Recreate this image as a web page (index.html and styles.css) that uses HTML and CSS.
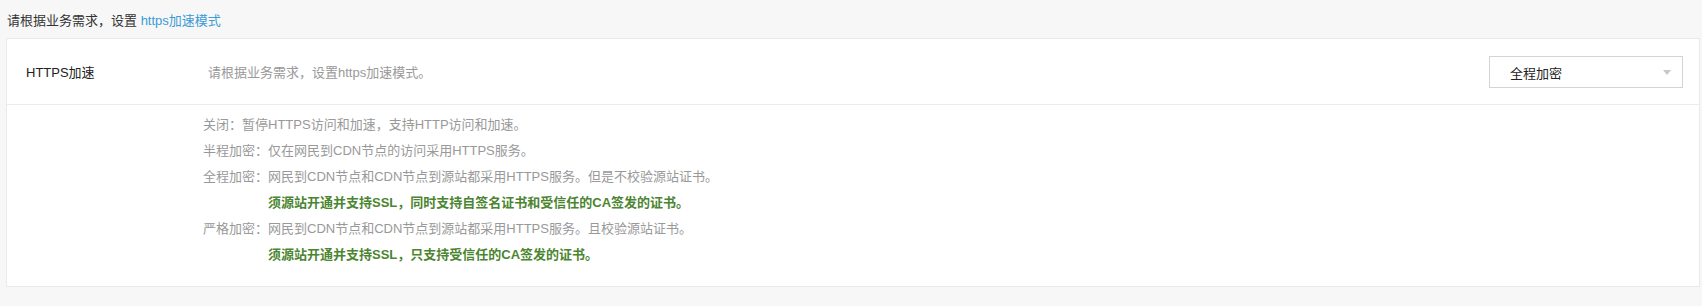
FILE: index.html
```html
<!DOCTYPE html>
<html lang="zh-CN">
<head>
<meta charset="utf-8">
<title>HTTPS加速</title>
<link rel="stylesheet" href="styles.css">
</head>
<body>
<div class="page">
  <div class="intro">请根据业务需求，设置 <a class="link" href="#">https加速模式</a></div>
  <div class="panel">
    <div class="row">
      <div class="row-label">HTTPS加速</div>
      <div class="row-desc">请根据业务需求，设置https加速模式。</div>
      <div class="select">
        <span class="select-text">全程加密</span>
        <span class="select-arrow"></span>
      </div>
    </div>
    <div class="details">
      <div class="line"><span class="label">关闭：</span>暂停HTTPS访问和加速，支持HTTP访问和加速。</div>
      <div class="line"><span class="label">半程加密：</span>仅在网民到CDN节点的访问采用HTTPS服务。</div>
      <div class="line"><span class="label">全程加密：</span>网民到CDN节点和CDN节点到源站都采用HTTPS服务。但是不校验源站证书。</div>
      <div class="line note">须源站开通并支持SSL，同时支持自签名证书和受信任的CA签发的证书。</div>
      <div class="line"><span class="label">严格加密：</span>网民到CDN节点和CDN节点到源站都采用HTTPS服务。且校验源站证书。</div>
      <div class="line note">须源站开通并支持SSL，只支持受信任的CA签发的证书。</div>
    </div>
  </div>
</div>
</body>
</html>
```
FILE: styles.css
```css
html, body {
  margin: 0;
  padding: 0;
  background: #f7f7f7;
}
body {
  font-family: "Liberation Sans", "Noto Sans CJK SC", sans-serif;
  font-size: 13px;
  color: #333;
}
.page {
  padding: 0 2px 0 6px;
}
.intro {
  height: 38px;
  line-height: 42px;
  padding-left: 1px;
  color: #333;
}
.link {
  color: #3a9bd6;
  text-decoration: none;
}
.panel {
  background: #fff;
  border: 1px solid #e9e9e9;
  height: 249px;
  box-sizing: border-box;
}
.row {
  display: flex;
  align-items: center;
  height: 65px;
  border-bottom: 1px solid #ececec;
  padding: 0 16px 0 19px;
}
.row-label {
  width: 182px;
  color: #222;
}
.row-desc {
  flex: 1;
  color: #999;
}
.select {
  width: 194px;
  height: 32px;
  box-sizing: border-box;
  border: 1px solid #d4d4d4;
  display: flex;
  align-items: center;
  padding: 0 11px 0 20px;
  margin-top: 1px;
}
.select-text {
  flex: 1;
  color: #222;
}
.select-arrow {
  width: 0;
  height: 0;
  border-left: 4px solid transparent;
  border-right: 4px solid transparent;
  border-top: 5px solid #c8c8c8;
}
.details {
  padding: 7px 0 0 196px;
}
.line {
  line-height: 26px;
  color: #999;
}
.note {
  padding-left: 65px;
  color: #4b8530;
  font-weight: bold;
}
```
